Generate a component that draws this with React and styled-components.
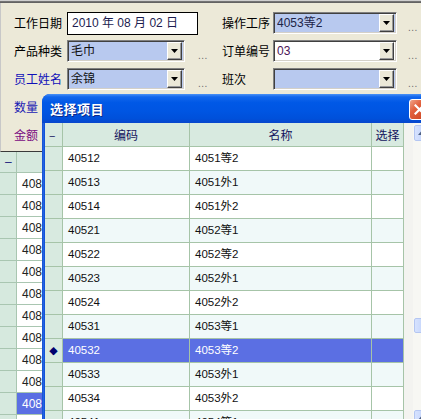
import React from "react";
import styled, { createGlobalStyle } from "styled-components";

const GlobalStyle = createGlobalStyle`
  html, body {
    margin: 0;
    padding: 0;
  }
  body {
    background: #ece9d8;
    font-family: "Liberation Sans", "Noto Sans CJK SC", sans-serif;
    font-size: 12px;
  }
`;

const Window = styled.div`
  position: relative;
  width: 421px;
  height: 419px;
  overflow: hidden;
  background: #ece9d8;
`;

const TopEdge = styled.div`
  height: 3px;
  background: linear-gradient(#cfcfcf 0, #cfcfcf 34%, #7c7c7c 34%, #5a5a5a 100%);
`;

const FormPanel = styled.div`
  box-sizing: border-box;
  height: 149px;
  padding: 9px 0 0 13px;
  border-left: 1px solid #c8c8c8;
  border-bottom: 1px solid #3a3a3a;
  display: flex;
  flex-direction: column;
  gap: 6px;
`;

const FormRow = styled.div`
  display: flex;
  height: 22px;
`;

const Field = styled.div`
  display: flex;
  align-items: center;
  width: ${(p) => (p.$width ? `${p.$width}px` : "auto")};
  height: 100%;
`;

const Label = styled.span`
  width: ${(p) => p.$w}px;
  flex: none;
  color: ${(p) => p.$color || "#000"};
  font-family: "Noto Sans CJK SC", sans-serif;
  font-size: 12px;
  line-height: 22px;
  white-space: nowrap;
`;

const DateInput = styled.div`
  box-sizing: border-box;
  width: 131px;
  height: 23px;
  margin-top: 1px;
  padding-left: 4px;
  border: 1px solid #000;
  background: #fff;
  color: #1c1c50;
  font-size: 12px;
  line-height: 21px;
  white-space: pre;
`;

const Combo = styled.div`
  box-sizing: border-box;
  width: ${(p) => p.$w}px;
  height: 22px;
  display: flex;
  align-items: center;
  padding: 0 2px 0 3px;
  border: 1px solid;
  border-color: #808080 #ffffff #ffffff #808080;
  box-shadow: inset 1px 1px 0 #404040, inset -1px -1px 0 #d4d0c8;
  background: ${(p) => p.$bg || "#b8c9ef"};
`;

const ComboText = styled.span`
  flex: 1;
  color: ${(p) => p.$color || "#101010"};
  font-size: 12px;
  line-height: 18px;
  white-space: nowrap;
  overflow: hidden;
`;

const DropButton = styled.span`
  box-sizing: border-box;
  width: 15px;
  height: 18px;
  display: flex;
  align-items: center;
  justify-content: center;
  background: #ece9d8;
  border: 1px solid;
  border-color: #ffffff #404040 #404040 #ffffff;
  box-shadow: inset -1px -1px 0 #9a9a9a;
`;

const Dots = styled.span`
  margin-left: ${(p) => p.$gap}px;
  align-self: flex-end;
  color: #6c6c6c;
  font-size: 10px;
  line-height: 12px;
  letter-spacing: 0.5px;
`;

const BackGrid = styled.div`
  display: grid;
  grid-template-columns: 17px 25px;
  grid-auto-rows: 22px;
  grid-template-rows: 21px;
`;

const BackIndicator = styled.div`
  box-sizing: border-box;
  border-right: 1px solid #a9c6b1;
  border-bottom: 1px solid #a9c6b1;
  background: #d6e9de;
  color: #1c1c80;
  font-size: 12px;
  line-height: 20px;
  padding-left: 5px;
`;

const BackCell = styled.div`
  box-sizing: border-box;
  border-bottom: 1px solid #a9c6b1;
  padding-left: 5px;
  background: ${(p) => (p.$head ? "#d6e9de" : p.$sel ? "#5b6fe3" : "#ffffff")};
  color: ${(p) => (p.$sel ? "#fff" : "#222")};
  font-size: 12px;
  line-height: 22px;
  white-space: nowrap;
  overflow: hidden;
`;

const Dialog = styled.div`
  position: absolute;
  left: 42px;
  top: 94px;
  width: 396px;
  height: 340px;
  display: flex;
  flex-direction: column;
  border-radius: 8px 8px 0 0;
  overflow: hidden;
  background: linear-gradient(90deg, #0a3fc4 0, #2a6be6 1px, #0b4ad6 3px);
`;

const TitleBar = styled.div`
  height: 29px;
  flex: none;
  display: flex;
  align-items: flex-start;
  padding: 0 8px;
  background: linear-gradient(
    #4a92f6 0,
    #1266ec 10%,
    #0058e6 30%,
    #0055e2 60%,
    #0050da 85%,
    #0846cc 100%
  );
`;

const Title = styled.span`
  margin-top: 6px;
  color: #fff;
  font-family: "Noto Sans CJK SC", sans-serif;
  font-weight: bold;
  font-size: 13px;
  line-height: 17px;
  letter-spacing: 0.5px;
  text-shadow: 1px 1px 0 #0c2a8a;
`;

const CloseButton = styled.span`
  box-sizing: border-box;
  margin-left: auto;
  margin-top: 5px;
  width: 21px;
  height: 21px;
  display: flex;
  align-items: center;
  justify-content: center;
  border: 1px solid #fff;
  border-radius: 3px;
  background: linear-gradient(135deg, #f0a48a 0, #e2613e 35%, #c9401c 100%);
`;

const DialogBody = styled.div`
  flex: 1;
  margin: 0 3px;
  display: flex;
  align-items: flex-start;
  background: #f3f3f0;
`;

const SelectGrid = styled.div`
  width: 359px;
  flex: none;
  display: grid;
  grid-template-columns: 18px 127px 182px 32px;
  grid-auto-rows: 24px;
`;

const HeadCell = styled.div`
  box-sizing: border-box;
  border-right: 1px solid #a6c4a8;
  border-bottom: 1px solid #a6c4a8;
  background: #d8eae0;
  color: #14145e;
  font-family: "Noto Sans CJK SC", sans-serif;
  font-size: 12px;
  line-height: 23px;
  text-align: ${(p) => (p.$left ? "left" : "center")};
  padding-left: ${(p) => (p.$left ? "4px" : "0")};
`;

const Indicator = styled.div`
  box-sizing: border-box;
  border-right: 1px solid #a6c4a8;
  border-bottom: 1px solid #a6c4a8;
  background: #d8eae0;
  color: #00006e;
  font-family: "DejaVu Sans", sans-serif;
  font-size: 11px;
  line-height: 23px;
  text-align: center;
`;

const Cell = styled.div`
  box-sizing: border-box;
  border-right: 1px solid #a6c4a8;
  border-bottom: 1px solid #a6c4a8;
  padding-left: 5px;
  background: ${(p) => (p.$sel ? "#5b6fe3" : p.$alt ? "#f0f9f9" : "#ffffff")};
  color: ${(p) => (p.$sel ? "#ffffff" : "#111")};
  font-size: 11.5px;
  line-height: 23px;
  white-space: nowrap;
  overflow: hidden;
`;

const ScrollTrack = styled.div`
  box-sizing: border-box;
  width: 17px;
  height: 304px;
  margin-left: 9px;
  padding: 2px 1px 1px;
  display: flex;
  flex-direction: column;
  background: #f7f7f3;
`;

const ScrollButton = styled.div`
  box-sizing: border-box;
  height: ${(p) => p.$h || 16}px;
  margin-top: ${(p) => (p.$auto ? "auto" : `${p.$offset || 0}px`)};
  display: flex;
  align-items: center;
  justify-content: center;
  border: 1px solid #b4c6f2;
  border-radius: 2px;
  background: linear-gradient(90deg, #d6e2fe, #bccefa);
`;

const Arrow = ({ up }) => (
  <svg width="7" height="4" viewBox="0 0 7 4">
    <path d={up ? "M0 4 L3.5 0 L7 4 Z" : "M0 0 L7 0 L3.5 4 Z"} fill={up ? "#4d6185" : "#000"} />
  </svg>
);

const items = [
  ["40512", "4051等2"],
  ["40513", "4051外1"],
  ["40514", "4051外2"],
  ["40521", "4052等1"],
  ["40522", "4052等2"],
  ["40523", "4052外1"],
  ["40524", "4052外2"],
  ["40531", "4053等1"],
  ["40532", "4053等2"],
  ["40533", "4053外1"],
  ["40534", "4053外2"],
  ["40541", "4054等1"],
];

const selectedIndex = 8;

// the rows of the grid behind the dialog; the last one is only a sliver
const backRows = Array.from({ length: 12 }, (_, i) =>
  i < 11 ? `408${String(i + 1).padStart(2, "0")}` : ""
);

const ComboBox = ({ w, value, color, bg }) => (
  <Combo $w={w} $bg={bg}>
    <ComboText $color={color}>{value}</ComboText>
    <DropButton>
      <Arrow />
    </DropButton>
  </Combo>
);

export default function App() {
  return (
    <>
      <GlobalStyle />
      <Window>
        <TopEdge />
        <FormPanel>
          <FormRow>
            <Field $width={208}>
              <Label $w={53}>工作日期</Label>
              <DateInput>2010 年 08 月 02 日</DateInput>
            </Field>
            <Field>
              <Label $w={51}>操作工序</Label>
              <ComboBox w={124} value="4053等2" color="#1c2448" />
              <Dots $gap={11}>...</Dots>
            </Field>
          </FormRow>
          <FormRow>
            <Field $width={208}>
              <Label $w={53}>产品种类</Label>
              <ComboBox w={118} value="毛巾" />
              <Dots $gap={13}>...</Dots>
            </Field>
            <Field>
              <Label $w={51}>订单编号</Label>
              <ComboBox w={124} value="03" color="#4a1456" bg="#ffffff" />
              <Dots $gap={11}>...</Dots>
            </Field>
          </FormRow>
          <FormRow>
            <Field $width={208}>
              <Label $w={53} $color="#1010b8">员工姓名</Label>
              <ComboBox w={118} value="余锦" />
              <Dots $gap={13}>...</Dots>
            </Field>
            <Field>
              <Label $w={51}>班次</Label>
              <ComboBox w={124} value="" />
              <Dots $gap={11}>...</Dots>
            </Field>
          </FormRow>
          <FormRow>
            <Field $width={208}>
              <Label $w={53} $color="#1a1ab4">数量</Label>
            </Field>
          </FormRow>
          <FormRow>
            <Field $width={208}>
              <Label $w={53} $color="#7a0a82">金额</Label>
            </Field>
          </FormRow>
        </FormPanel>

        <BackGrid>
          <BackIndicator>–</BackIndicator>
          <BackCell $head />
          {backRows.map((code, i) => (
            <React.Fragment key={i}>
              <BackIndicator />
              <BackCell $sel={i === 10}>{code}</BackCell>
            </React.Fragment>
          ))}
        </BackGrid>

        <Dialog>
          <TitleBar>
            <Title>选择项目</Title>
            <CloseButton>
              <svg width="11" height="11" viewBox="0 0 11 11">
                <path d="M1.5 1.5 L9.5 9.5 M9.5 1.5 L1.5 9.5" stroke="#fff" strokeWidth="2.2" strokeLinecap="square" />
              </svg>
            </CloseButton>
          </TitleBar>
          <DialogBody>
            <SelectGrid>
              <HeadCell $left>–</HeadCell>
              <HeadCell>编码</HeadCell>
              <HeadCell>名称</HeadCell>
              <HeadCell>选择</HeadCell>
              {items.map(([code, name], i) => {
                const sel = i === selectedIndex;
                const alt = i % 2 === 1;
                return (
                  <React.Fragment key={code}>
                    <Indicator>{sel ? "◆" : ""}</Indicator>
                    <Cell $sel={sel} $alt={alt}>{code}</Cell>
                    <Cell $sel={sel} $alt={alt}>{name}</Cell>
                    <Cell $sel={sel} $alt={alt} />
                  </React.Fragment>
                );
              })}
            </SelectGrid>
            <ScrollTrack>
              <ScrollButton>
                <Arrow up />
              </ScrollButton>
              <ScrollButton $offset={177} $h={15} />
              <ScrollButton $auto>
                <Arrow up />
              </ScrollButton>
            </ScrollTrack>
          </DialogBody>
        </Dialog>
      </Window>
    </>
  );
}
